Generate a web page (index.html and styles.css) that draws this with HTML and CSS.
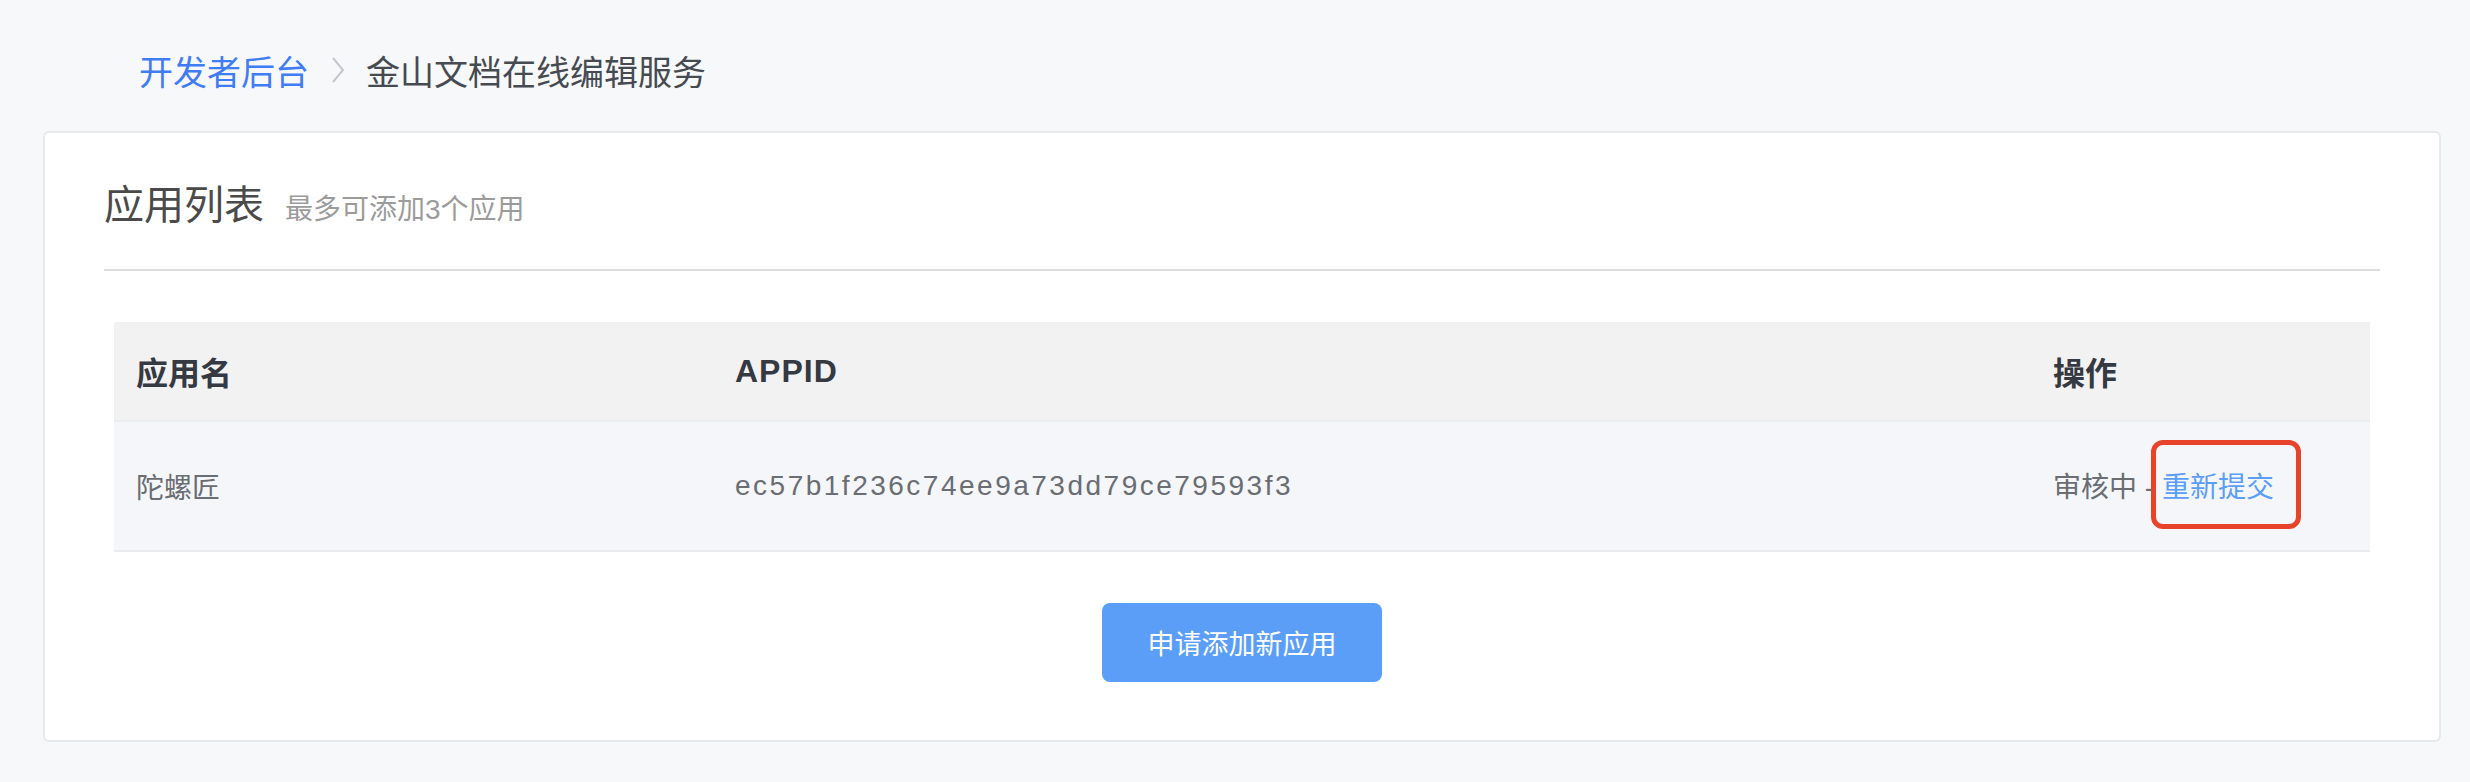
FILE: index.html
```html
<!DOCTYPE html>
<html lang="zh-CN">
<head>
<meta charset="utf-8">
<title>金山文档在线编辑服务</title>
<link rel="stylesheet" href="styles.css">
</head>
<body>
<div class="page">
  <nav class="crumbs">
    <a class="crumb-link" href="#">开发者后台</a>
    <svg class="crumb-sep" width="14" height="26" viewBox="0 0 14 26"><polyline points="2,1 12,13 2,25" fill="none" stroke="#c3c6cc" stroke-width="2"/></svg>
    <span class="crumb-current">金山文档在线编辑服务</span>
  </nav>
  <section class="card">
    <header class="card-head">
      <h1 class="card-title">应用列表</h1>
      <span class="card-sub">最多可添加3个应用</span>
    </header>
    <div class="table">
      <div class="row row-head">
        <div class="cell">应用名</div>
        <div class="cell cell-latin">APPID</div>
        <div class="cell">操作</div>
      </div>
      <div class="row row-body">
        <div class="cell">陀螺匠</div>
        <div class="cell cell-hash">ec57b1f236c74ee9a73dd79ce79593f3</div>
        <div class="cell">审核中 - <a class="resubmit" href="#">重新提交</a></div>
      </div>
    </div>
    <div class="actions">
      <button class="btn-primary" type="button">申请添加新应用</button>
    </div>
  </section>
</div>
</body>
</html>
```
FILE: styles.css
```css
html, body {
  margin: 0;
  padding: 0;
  background: #f7f8fa;
  font-family: "Liberation Sans", "Noto Sans CJK SC", sans-serif;
}
.page {
  padding: 0 29px 0 43px;
}
.crumbs {
  display: flex;
  align-items: center;
  height: 40px;
  padding: 50px 0 41px 96px;
  font-size: 34px;
}
.crumb-link {
  color: #3f7cf6;
  text-decoration: none;
}
.crumb-sep {
  margin: 0 21px 0 22px;
}
.crumb-current {
  color: #464a51;
}
.card {
  background: #fff;
  border: 2px solid #e8e9ec;
  border-radius: 6px;
  padding: 0 59px 58px;
}
.card-head {
  display: flex;
  align-items: baseline;
  height: 50px;
  padding: 47px 0 39px;
  border-bottom: 2px solid #dddddd;
}
.card-title {
  margin: 0;
  font-size: 40px;
  font-weight: normal;
  line-height: 50px;
  color: #4a4a4a;
}
.card-sub {
  margin-left: 21px;
  font-size: 28px;
  color: #9b9b9b;
}
.table {
  margin: 51px 10px 0;
}
.row {
  display: grid;
  grid-template-columns: 599px 1318px 1fr;
  align-items: center;
}
.cell {
  padding-left: 22px;
}
.row-head {
  height: 98px;
  background: #f2f2f2;
  border-bottom: 2px solid #ebedf0;
  font-size: 32px;
  font-weight: bold;
  color: #353941;
}
.cell-latin {
  letter-spacing: 1px;
}
.row-body {
  height: 128px;
  background: #f5f6fa;
  border-bottom: 2px solid #e9ebef;
  font-size: 28px;
  color: #6a6d72;
}
.cell-hash {
  letter-spacing: 2.5px;
}
.resubmit {
  position: relative;
  display: inline-block;
  line-height: 40px;
  color: #5a9ef8;
  text-decoration: none;
}
.resubmit::after {
  content: "";
  position: absolute;
  left: -11px;
  right: -27px;
  top: -28px;
  bottom: -21px;
  border: 5px solid #e8432b;
  border-radius: 12px;
}
.actions {
  display: flex;
  justify-content: center;
  margin-top: 51px;
}
.btn-primary {
  width: 280px;
  height: 79px;
  border: none;
  border-radius: 8px;
  background: #5a9ef8;
  color: #fff;
  font-family: "Liberation Sans", "Noto Sans CJK SC", sans-serif;
  font-size: 27px;
  cursor: pointer;
}
```
